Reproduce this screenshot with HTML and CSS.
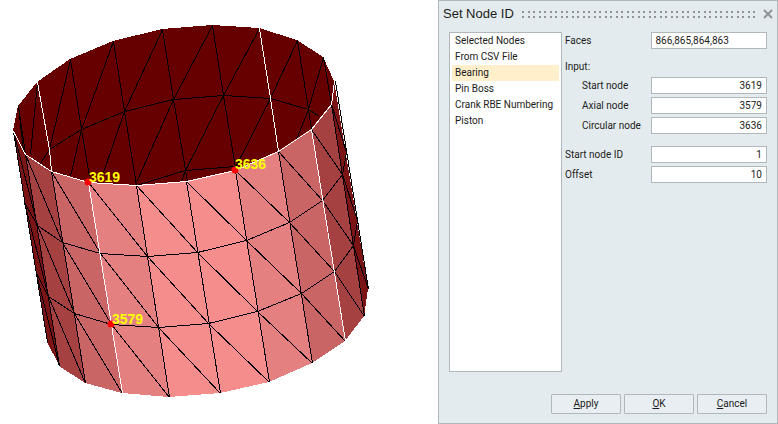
FILE: index.html
```
<!DOCTYPE html>
<html lang="en">
<head>
<meta charset="utf-8">
<title>Set Node ID</title>
<link rel="stylesheet" href="styles.css">
</head>
<body>
<main class="workspace">
  <svg class="mesh" viewBox="0 0 438 424" role="img" aria-label="Cylinder mesh with nodes 3619, 3636 and 3579">
    <g class="faces">
      <path fill="#660000" d="M13 131 18 106 37 82 70 59 113 41 162 29 212 25 259 28 297 40 323 57 334 81 331 104 311 129 278 151 235 170 186 181 136 185 88 182 51 171 25 154Z"/>
      <path fill="#7b1414" d="M13 131 25 154 59 365 47 342Z"/>
      <path fill="#a64141" d="M25 154 51 171 85 383 59 366Z"/>
      <path fill="#c96565" d="M51 171 88 182 122 393 85 383Z"/>
      <path fill="#e58080" d="M88 182 136 185 169 397 122 393Z"/>
      <path fill="#f58d8d" d="M136 185 186 181 235 170 269 382 220 393 169 397Z"/>
      <path fill="#e58080" d="M235 170 278 151 312 363 269 382Z"/>
      <path fill="#c96565" d="M278 151 311 129 345 341 312 363Z"/>
      <path fill="#a64141" d="M311 129 331 104 364 316 345 341Z"/>
      <path fill="#7b1414" d="M331 104 334 81 368 289 364 316Z"/>
    </g>
    <g class="edges" transform="translate(.5 .5)">
      <path d="M40 163 49 149 81 129 124 111 173 99 223 95 270 98 308 109 319 116M136 185 185 170 235 166"/>
      <path d="M18 106 25 154M70 59 81 129 89 176M113 41 124 111 136 185M162 29 173 99 187 181M212 25 223 95 235 167M297 40 308 109 311 129M323 57 331 104"/>
      <path d="M18 106 23 150M37 82 30 154M70 59 49 149M113 41 81 129 70 176M162 29 124 111 101 178M212 25 173 99 136 182M259 28 223 95 185 170 181 181M297 40 270 98 235 167M323 57 308 109 296 139"/>
      <path d="M24 202 37 225 62 242 100 253 147 256 197 252 246 240 289 222 322 200 342 174 346 152"/>
      <path d="M36 273 48 296 74 313 111 324 158 327 208 323 257 311 301 293 334 271 353 245 357 220"/>
      <path d="M13 131 47 342M25 154 59 366M51 171 85 383M136 185 169 397M186 181 220 393M235 170 269 382M278 151 312 363M331 104 364 316M335 81 368 289"/>
      <path d="M13 131 37 225 74 313 122 393M24 202 48 296 85 383M36 273 59 366M25 154 62 242 111 324 169 397M51 171 100 253 158 327 220 393M88 182 147 256 208 323 269 382M136 185 197 252 257 311 312 363M186 181 246 240 301 293 345 341M235 170 289 222 334 271 364 316M278 151 322 200 353 245 368 289M311 129 342 174 357 220M331 104 346 152"/>
    </g>
    <path class="feature" transform="translate(.5 .5)" d="M13 131 25 154 51 171 88 182 136 185 186 181 235 170 278 151 311 129 331 104 334 81M37 82 49 149 51 171M259 28 270 98 278 151M88 182 122 393M311 129 345 341"/>
    <g class="nodes">
      <circle cx="88" cy="182" r="3.5"/>
      <circle cx="235" cy="170" r="3.5"/>
      <circle cx="111" cy="324" r="3.5"/>
    </g>
    <g class="tags">
      <text x="89" y="182">3619</text>
      <text x="235" y="169">3636</text>
      <text x="112" y="324">3579</text>
    </g>
  </svg>

  <section class="dialog" aria-labelledby="dialog-title">
    <header class="titlebar">
      <h1 id="dialog-title">Set Node ID</h1>
      <span class="grip"></span>
      <button class="close" type="button" aria-label="Close">
        <svg viewBox="0 0 10 10" width="10" height="10"><path d="M1 1 9 9M9 1 1 9"/></svg>
      </button>
    </header>
    <form class="content">
      <ul class="methods">
        <li>Selected Nodes</li>
        <li>From CSV File</li>
        <li class="current">Bearing</li>
        <li>Pin Boss</li>
        <li>Crank RBE Numbering</li>
        <li>Piston</li>
      </ul>
      <div class="fields">
        <div class="row"><label for="faces">Faces</label><input class="text" id="faces" value="866,865,864,863"></div>
        <fieldset>
          <legend>Input:</legend>
          <div class="row"><label for="start">Start node</label><input id="start" value="3619"></div>
          <div class="row"><label for="axial">Axial node</label><input id="axial" value="3579"></div>
          <div class="row"><label for="circular">Circular node</label><input id="circular" value="3636"></div>
        </fieldset>
        <div class="row"><label for="start-id">Start node ID</label><input id="start-id" value="1"></div>
        <div class="row"><label for="offset">Offset</label><input id="offset" value="10"></div>
      </div>
    </form>
    <footer class="actions">
      <button type="button"><u>A</u>pply</button>
      <button type="button"><u>O</u>K</button>
      <button type="button"><u>C</u>ancel</button>
    </footer>
  </section>
</main>
</body>
</html>
```
FILE: styles.css
```
* { box-sizing: border-box; }

body {
  margin: 0;
  background: #fff;
  color: #1c1c20;
  font: 10px/16px Roboto, "Liberation Sans", sans-serif;
}

.workspace {
  display: grid;
  grid-template-columns: 438fr 340fr;
  align-items: start;
}

.mesh { display: block; width: 100%; }
.faces, .edges, .feature { shape-rendering: crispEdges; }
.edges, .feature { fill: none; stroke: #000; stroke-width: 1; }
.feature { stroke: #fff; }
.nodes { fill: #f00; }
.tags { fill: #ff0; font: bold 14px "Liberation Sans", sans-serif; }

.dialog {
  display: flex;
  flex-direction: column;
  min-height: 100vh;
  padding: 0 10px 9px;
  border: 1px solid #b0b8bc;
  background: #e4ebef;
}

.titlebar {
  display: flex;
  align-items: center;
  gap: 8px;
  height: 26px;
  margin: 0 -6px 5px;
}
.titlebar h1 {
  margin: 0;
  font: 13px/16px "Liberation Sans", sans-serif;
}
/* Two rows of small square dots */
.grip {
  flex: 1;
  height: 7px;
  background:
    conic-gradient(from 270deg at 2px 2px, #8f9599 90deg, transparent 0) 0 0 / 11px 5px,
    conic-gradient(from 270deg at 2px 2px, #8f9599 90deg, transparent 0) 6px 0 / 11px 5px;
}
.close { padding: 0; border: 0; background: none; line-height: 0; }
.close path { stroke: #8f9498; stroke-width: 2; }

.content {
  display: grid;
  grid-template-columns: minmax(0, 113fr) minmax(0, 202fr);
  gap: 3px;
}
.methods {
  min-height: 340px;
  margin: 0;
  padding: 0 2px;
  border: 1px solid #b0b8bc;
  background: #fff;
  list-style: none;
}
.methods li { padding-left: 3px; white-space: nowrap; }
.methods .current { background: #fff0cb; }

.fields { display: flex; flex-direction: column; gap: 3px; }
.row {
  display: grid;
  grid-template-columns: 86fr 115fr;
  align-items: center;
}
fieldset {
  display: flex;
  flex-direction: column;
  gap: 3px;
  margin: 7px 0 9px;
  padding: 0;
  border: 0;
}
legend { padding: 0; margin-bottom: 2px; }
fieldset label { padding-left: 17px; }
label { white-space: nowrap; }
input {
  width: 100%;
  height: 17px;
  padding: 0 4px;
  border: 1px solid #b0b8bc;
  background: #fff;
  color: inherit;
  font: inherit;
  text-align: right;
}
.text { padding: 0 3px; text-align: left; }

.actions {
  display: flex;
  justify-content: flex-end;
  gap: 3px;
  margin-top: auto;
}
.actions button {
  width: 70px;
  height: 20px;
  padding: 0;
  border: 1px solid #b0b8bc;
  border-radius: 1px;
  background: #e8eef2;
  color: inherit;
  font: inherit;
}
```
